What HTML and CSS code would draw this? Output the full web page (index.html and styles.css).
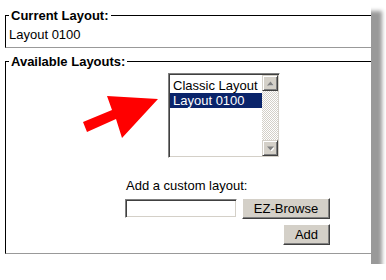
FILE: index.html
```html
<!DOCTYPE html>
<html>
<head>
<meta charset="utf-8">
<link rel="stylesheet" href="styles.css">
</head>
<body>
<div class="sheet">
  <fieldset class="group current">
    <legend>Current Layout:</legend>
    <div class="value">Layout 0100</div>
  </fieldset>
  <fieldset class="group available">
    <legend>Available Layouts:</legend>
    <div class="listbox">
      <ul class="options">
        <li>Classic Layout</li>
        <li class="selected">Layout 0100</li>
      </ul>
      <div class="scrollbar">
        <span class="sb-btn"><svg width="7" height="5" viewBox="0 0 7 5"><polygon points="3.5,0.5 7,4.5 0,4.5" fill="#fff" transform="translate(1,1)"/><polygon points="3.5,0.5 7,4.5 0,4.5" fill="#808080"/></svg></span>
        <span class="sb-track"></span>
        <span class="sb-btn"><svg width="7" height="5" viewBox="0 0 7 5"><polygon points="0,0.5 7,0.5 3.5,4.5" fill="#fff" transform="translate(1,1)"/><polygon points="0,0.5 7,0.5 3.5,4.5" fill="#808080"/></svg></span>
      </div>
    </div>
    <div class="custom">
      <label class="label">Add a custom layout:</label>
      <div class="row">
        <input class="text" type="text">
        <button class="btn browse">EZ-Browse</button>
      </div>
      <div class="row end">
        <button class="btn add">Add</button>
      </div>
    </div>
  </fieldset>
  <svg class="arrow" width="80" height="46" viewBox="0 0 80 46"><polygon points="3,28 32,16 27,2 78,5 42,44 36,25 7,38" fill="#ff0000"/></svg>
</div>
</body>
</html>
```
FILE: styles.css
```css
html, body {
  margin: 0;
  padding: 0;
  background: #fff;
}
body {
  font-family: "Liberation Sans", Arial, sans-serif;
  font-size: 13px;
  line-height: 15px;
  color: #000;
}
.sheet {
  position: relative;
  width: 371px;
  height: 264px;
  background: #fff;
  box-shadow: 11px 11px 4px #999;
  overflow: hidden;
}
.group {
  margin: 0 0 0 5px;
  padding: 4px 0 5px 3px;
  border: 1px solid #000;
  border-right: 0;
  border-bottom-color: #999;
  min-width: 0;
}
.group legend {
  padding: 0 2px;
  font-weight: bold;
  line-height: 15px;
}
.current {
  margin-top: 8px;
}
.available {
  margin-top: 6px;
  padding-bottom: 8px;
}
.value {
  line-height: 15px;
}
.listbox {
  display: flex;
  width: 112px;
  height: 85px;
  box-sizing: border-box;
  margin-left: 159px;
  border: 1px solid;
  border-color: #808080 #fff #fff #808080;
  box-shadow: inset 1px 1px #404040, inset -1px -1px #d4d0c8;
  padding: 1px;
}
.options {
  flex: 1;
  list-style: none;
  margin: 0;
  padding: 3px 0 0;
}
.options li {
  padding-left: 3px;
  line-height: 15px;
  white-space: nowrap;
}
.options .selected {
  background: #0a246a;
  color: #fff;
}
.scrollbar {
  display: flex;
  flex-direction: column;
  width: 16px;
}
.sb-btn {
  display: flex;
  align-items: center;
  justify-content: center;
  width: 16px;
  height: 16px;
  box-sizing: border-box;
  background: #d4d0c8;
  border: 1px solid;
  border-color: #d4d0c8 #404040 #404040 #d4d0c8;
  box-shadow: inset 1px 1px #fff, inset -1px -1px #808080;
}
.sb-track {
  flex: 1;
  background: repeating-conic-gradient(#d4d0c8 0 25%, #fff 0 50%) 0 0 / 2px 2px;
}
.custom {
  display: flex;
  flex-direction: column;
  width: 205px;
  margin: 20px 0 0 116px;
}
.label {
  padding-left: 1px;
  line-height: 15px;
}
.row {
  display: flex;
  align-items: center;
  gap: 5px;
  margin-top: 5px;
}
.row.end {
  justify-content: flex-end;
}
.text {
  width: 112px;
  height: 19px;
  box-sizing: border-box;
  margin: 0;
  padding: 0;
  background: #fff;
  border: 1px solid;
  border-color: #808080 #fff #fff #808080;
  box-shadow: inset 1px 1px #404040, inset -1px -1px #d4d0c8;
}
.btn {
  height: 21px;
  box-sizing: border-box;
  margin: 0;
  padding: 0;
  font-family: "Liberation Sans", Arial, sans-serif;
  font-size: 13px;
  color: #000;
  background: #d4d0c8;
  border: 1px solid;
  border-color: #fff #404040 #404040 #fff;
  box-shadow: inset -1px -1px #808080;
}
.browse {
  width: 88px;
}
.add {
  width: 47px;
}
.arrow {
  position: absolute;
  left: 80px;
  top: 94px;
}
```
